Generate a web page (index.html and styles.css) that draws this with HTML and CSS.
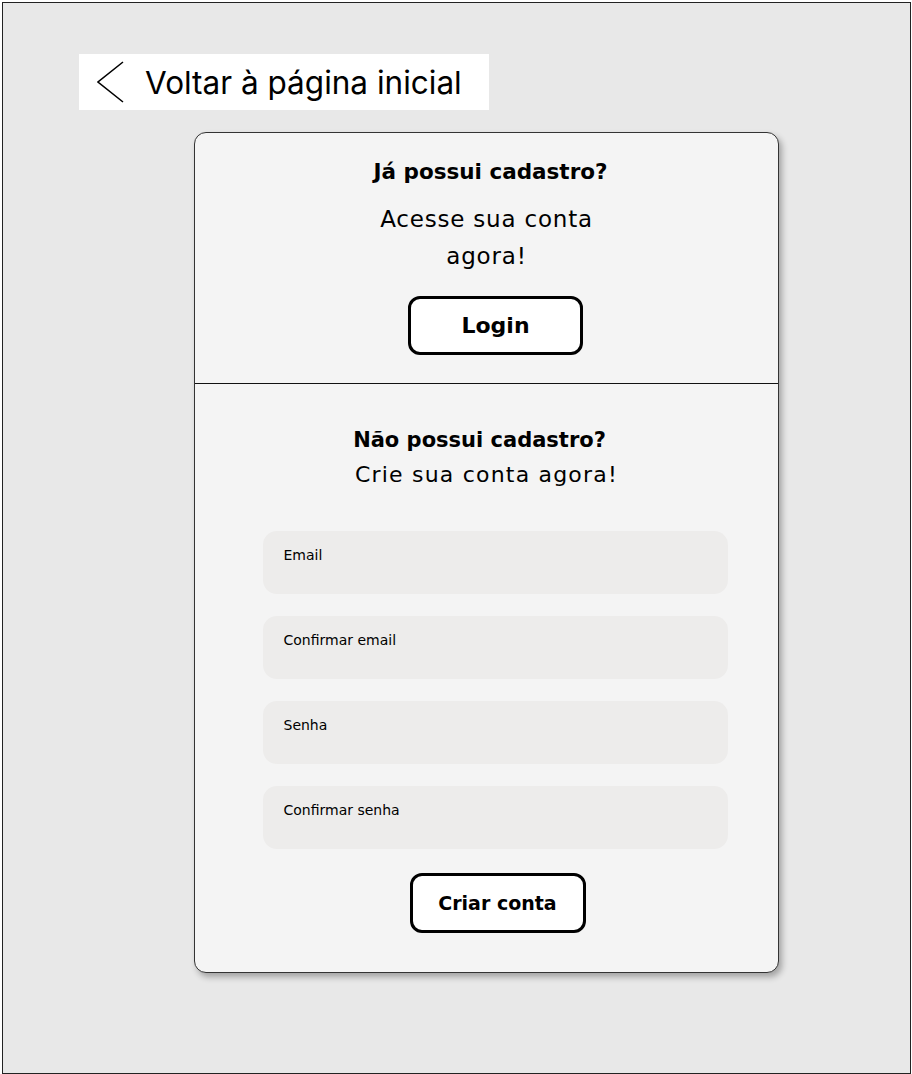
FILE: index.html
```html
<!DOCTYPE html>
<html lang="pt-BR">
<head>
    <meta charset="UTF-8">
    <meta name="viewport" content="width=device-width, initial-scale=1.0">
    <title>Cadastro</title>
    <link rel="stylesheet" href="styles.css">
</head>
<body>
    <div class="frame">
        <a class="back-link" href="#">
            <svg class="back-icon" width="28" height="42" viewBox="0 0 28 42" aria-hidden="true">
                <polyline points="26,1 1,21 26,41" fill="none" stroke="#000" stroke-width="1.6"/>
            </svg>
            <span>Voltar à página inicial</span>
        </a>

        <div class="card">
            <div class="login-box">
                <h2 class="login-title">Já possui cadastro?</h2>
                <p class="login-text">Acesse sua conta agora!</p>
                <button class="btn btn-login">Login</button>
            </div>

            <div class="signup-box">
                <h2 class="signup-title">Não possui cadastro?</h2>
                <p class="signup-text">Crie sua conta agora!</p>

                <form class="signup-form">
                    <label class="field">Email</label>
                    <label class="field">Confirmar email</label>
                    <label class="field">Senha</label>
                    <label class="field">Confirmar senha</label>
                    <button type="button" class="btn btn-create">Criar conta</button>
                </form>
            </div>
        </div>
    </div>
</body>
</html>
```

FILE: styles.css
```css
body {
    margin: 0;
    padding: 0;
    background-color: #fff;
    font-family: "DejaVu Sans", Arial, sans-serif;
    color: #000;
}

.frame {
    margin: 2px 1px 0 2px;
    height: 1072px;
    box-sizing: border-box;
    border: 1px solid #222;
    background-color: #e8e8e8;
    padding: 51px 0 0 76px;
}

.back-link {
    display: flex;
    align-items: center;
    width: 410px;
    height: 56px;
    box-sizing: border-box;
    padding-left: 18px;
    background-color: #fff;
    text-decoration: none;
    color: #000;
    font-family: Inter, "Liberation Sans", sans-serif;
    font-size: 31.5px;
}

.back-icon {
    margin-right: 20px;
}

.card {
    width: 585px;
    height: 841px;
    box-sizing: border-box;
    margin: 22px 0 0 115px;
    background-color: #f4f4f4;
    border: 1px solid #333;
    border-radius: 12px;
    box-shadow: 3px 4px 6px rgba(0, 0, 0, 0.3);
    overflow: hidden;
}

h2 {
    margin: 0;
    font-size: 20px;
    font-weight: 700;
    line-height: 28px;
    text-align: center;
}

.login-box {
    height: 251px;
    box-sizing: border-box;
    border-bottom: 1px solid #111;
    padding-top: 25px;
    display: flex;
    flex-direction: column;
    align-items: center;
}

.login-title {
    font-size: 21.5px;
    margin-left: 8px;
}

.login-text {
    width: 240px;
    margin: 15px 0 0;
    font-size: 23px;
    letter-spacing: 0.8px;
    line-height: 37px;
    text-align: center;
}

.btn {
    background-color: #fff;
    border: 3px solid #000;
    border-radius: 12px;
    font-family: "DejaVu Sans", Arial, sans-serif;
    font-weight: 700;
    color: #000;
    cursor: pointer;
}

.btn-login {
    width: 175px;
    height: 59px;
    margin: 21px 0 0 18px;
    font-size: 22px;
}

.signup-box {
    padding-top: 42px;
    display: flex;
    flex-direction: column;
    align-items: center;
}

.signup-title {
    font-size: 21px;
    margin-right: 14px;
}

.signup-text {
    margin: 6px 0 0;
    font-size: 22px;
    letter-spacing: 1.2px;
    line-height: 30px;
}

.signup-form {
    width: 465px;
    margin: 41px 0 0 17px;
    display: flex;
    flex-direction: column;
    gap: 22px;
}

.field {
    display: block;
    height: 63px;
    box-sizing: border-box;
    padding: 14px 0 0 21px;
    background-color: #edeceb;
    border-radius: 14px;
    font-size: 14px;
    line-height: 20px;
}

.btn-create {
    align-self: center;
    width: 176px;
    height: 60px;
    margin: 2px 0 0 5px;
    font-size: 19px;
}
```
